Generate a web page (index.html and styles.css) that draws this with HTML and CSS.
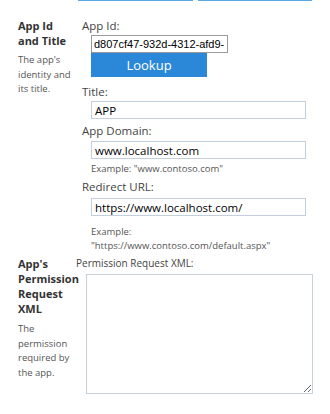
FILE: index.html
```html
<!DOCTYPE html>
<html lang="en">
<head>
<meta charset="UTF-8" />
<meta name="viewport" content="width=device-width, initial-scale=1" />
<title>App Registration</title>
<link rel="stylesheet" href="styles.css">
</head>
<body>

<div class="tabs">
  <div class="tab tab-first"></div>
  <div class="tab tab-second"></div>
</div>

<section class="group group-app">
  <div class="group-info">
    <div class="group-title">App Id and Title</div>
    <div class="group-desc">The app's identity and its title.</div>
  </div>
  <div class="group-fields">
    <div class="field-label">App Id:</div>
    <input class="field-input input-id" type="text" value="d807cf47-932d-4312-afd9-" />
    <button class="btn-lookup" type="button">Lookup</button>

    <div class="field-label label-title">Title:</div>
    <input class="field-input" type="text" value="APP" />

    <div class="field-label label-domain">App Domain:</div>
    <input class="field-input input-domain" type="text" value="www.localhost.com" />
    <div class="field-hint hint-domain">Example: "www.contoso.com"</div>

    <div class="field-label label-redirect">Redirect URL:</div>
    <input class="field-input input-redirect" type="text" value="https://www.localhost.com/" />
    <div class="field-hint hint-redirect">Example: "https://www.contoso.com/default.aspx"</div>
  </div>
</section>

<section class="group group-perm">
  <div class="group-info">
    <div class="group-title">App's Permission Request XML</div>
    <div class="group-desc">The permission required by the app.</div>
  </div>
  <div class="group-fields">
    <div class="field-label label-perm">Permission Request XML:</div>
    <textarea class="field-area"></textarea>
  </div>
</section>

</body>
</html>
```

FILE: styles.css
```css
body {
  margin: 0; padding: 0;
  font-family: 'Open Sans', 'Noto Sans', Arial, sans-serif;
  background: #fff;
  color: #333;
}
.tabs {
  display: flex;
  padding-left: 78px;
  gap: 5px;
  height: 18px;
}
.tab {
  height: 1px;
  border-top: 1px solid #5aa8e4;
}
.tab-first { width: 115px; }
.tab-second { width: 114px; }

.group {
  display: flex;
}
.group-info {
  width: 56px;
  padding-left: 18px;
}
.group-title {
  font-weight: 700;
  font-size: 11px;
  line-height: 15px;
  color: #333;
}
.group-desc {
  font-size: 9.5px;
  line-height: 14.5px;
  color: #555;
  margin-top: 5px;
}
.group-fields {
  flex: 1;
}
.group-app .group-fields {
  padding-left: 8px;
}
.group-perm {
  margin-top: 3px;
}
.group-perm .group-desc {
  margin-top: 6px;
}
.group-perm .group-fields {
  padding-left: 2px;
}

.field-label {
  font-size: 11.5px;
  line-height: 16px;
  color: #444;
}
.field-input {
  display: block;
  box-sizing: border-box;
  margin: 1px 0 0 9px;
  width: 215px;
  height: 18px;
  padding: 0 3px;
  border: 1px solid #c3cfdc;
  font-family: 'Open Sans', 'Noto Sans', Arial, sans-serif;
  font-size: 11.5px;
  color: #000;
  outline: none;
}
.input-id {
  width: 137px;
  border-color: #9a9a9a;
  font-family: 'Liberation Sans', Arial, sans-serif;
  font-size: 11px;
  padding: 0 2px;
}
.btn-lookup {
  display: block;
  margin-left: 9px;
  width: 116px;
  height: 24px;
  border: none;
  background: #2b88d8;
  color: #fff;
  font-family: 'Open Sans', 'Noto Sans', Arial, sans-serif;
  font-size: 13px;
  padding: 0;
}
.label-title { margin-top: 7px; }
.label-domain { margin-top: 4px; }
.input-domain { margin-top: 2px; }
.label-redirect { margin-top: 3px; }
.input-redirect { margin-top: 3px; }
.field-hint {
  margin-left: 9px;
  font-size: 9.5px;
  line-height: 14px;
  color: #555;
}
.hint-domain { margin-top: 3px; }
.hint-redirect { margin-top: 9px; width: 200px; }

.label-perm {
  font-size: 10px;
  line-height: 14px;
}
.field-area {
  display: block;
  box-sizing: border-box;
  margin: 4px 0 0 10px;
  width: 227px;
  height: 120px;
  border: 1px solid #c8d0da;
  resize: both;
  outline: none;
}
```
